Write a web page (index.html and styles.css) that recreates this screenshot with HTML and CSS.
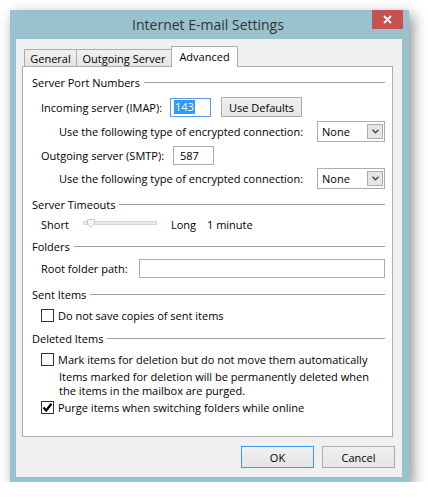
FILE: index.html
```html
<!DOCTYPE html>
<html lang="en">
<head>
    <meta charset="UTF-8">
    <meta name="viewport" content="width=device-width, initial-scale=1.0">
    <title>Internet E-mail Settings</title>
    <link rel="stylesheet" href="styles.css">
</head>
<body>
    <div class="window">
        <div class="titlebar">
            <span class="title">Internet E-mail Settings</span>
            <div class="close-btn">
                <svg width="9" height="9" viewBox="0 0 9 9"><path d="M1 1 L8 8 M8 1 L1 8" stroke="#fff" stroke-width="1.8"/></svg>
            </div>
        </div>

        <div class="client">
            <div class="tabs">
                <div class="tab">General</div>
                <div class="tab">Outgoing Server</div>
                <div class="tab active">Advanced</div>
            </div>

            <div class="panel">
                <div class="group-title"><span>Server Port Numbers</span></div>

                <div class="row row-imap">
                    <span class="label lbl-imap">Incoming server (IMAP):</span>
                    <div class="textbox port focused"><span class="selected-text">143</span></div>
                    <button class="btn btn-defaults">Use Defaults</button>
                </div>
                <div class="row row-enc">
                    <span class="label lbl-enc">Use the following type of encrypted connection:</span>
                    <div class="combo">
                        <span>None</span>
                        <div class="combo-arrow">
                            <svg width="7" height="5" viewBox="0 0 7 5"><path d="M0.5 0.8 L3.5 3.8 L6.5 0.8" fill="none" stroke="#444" stroke-width="1.4"/></svg>
                        </div>
                    </div>
                </div>
                <div class="row row-smtp">
                    <span class="label lbl-smtp">Outgoing server (SMTP):</span>
                    <div class="textbox port">587</div>
                </div>
                <div class="row row-enc row-enc2">
                    <span class="label lbl-enc">Use the following type of encrypted connection:</span>
                    <div class="combo">
                        <span>None</span>
                        <div class="combo-arrow">
                            <svg width="7" height="5" viewBox="0 0 7 5"><path d="M0.5 0.8 L3.5 3.8 L6.5 0.8" fill="none" stroke="#444" stroke-width="1.4"/></svg>
                        </div>
                    </div>
                </div>

                <div class="group-title gt-timeouts"><span>Server Timeouts</span></div>
                <div class="row row-timeout">
                    <span class="lbl-short">Short</span>
                    <div class="slider">
                        <svg class="slider-thumb" width="8" height="9" viewBox="0 0 8 9"><path d="M0.5 0.5 H7.5 V5 L4 8.5 L0.5 5 Z" fill="#f3f3f3" stroke="#c8c8c8"/></svg>
                    </div>
                    <span class="lbl-long">Long</span>
                    <span>1 minute</span>
                </div>

                <div class="group-title gt-folders"><span>Folders</span></div>
                <div class="row row-root">
                    <span class="label lbl-root">Root folder path:</span>
                    <div class="textbox root-path"></div>
                </div>

                <div class="group-title gt-sent"><span>Sent Items</span></div>
                <label class="row check-row row-sent">
                    <span class="checkbox"></span>
                    Do not save copies of sent items
                </label>

                <div class="group-title gt-deleted"><span>Deleted Items</span></div>
                <label class="row check-row row-mark">
                    <span class="checkbox"></span>
                    Mark items for deletion but do not move them automatically
                </label>
                <div class="note">Items marked for deletion will be permanently deleted when<br>the items in the mailbox are purged.</div>
                <label class="row check-row row-purge">
                    <span class="checkbox">
                        <svg width="11" height="11" viewBox="0 0 11 11"><path d="M1.5 5.5 L4.2 8.5 L9.5 1.8" fill="none" stroke="#000" stroke-width="2.2"/></svg>
                    </span>
                    Purge items when switching folders while online
                </label>
            </div>

            <div class="buttons">
                <button class="btn btn-dialog default">OK</button>
                <button class="btn btn-dialog">Cancel</button>
            </div>
        </div>
    </div>
</body>
</html>
```

FILE: styles.css
```css
body {
    margin: 0;
    background: #fff;
    font-family: 'Open Sans', 'Noto Sans', sans-serif;
    font-size: 11px;
    color: #000;
}

.window {
    position: relative;
    margin: 10px 0 0 10px;
    width: 399px;
    height: 472px;
    box-sizing: border-box;
    padding: 0 7px 5px 6px;
    background: #98c2cd;
    box-shadow: 4px 5px 13px rgba(0, 0, 0, 0.45);
}

.titlebar {
    height: 29px;
    display: flex;
    align-items: center;
    justify-content: center;
}

.title {
    font-size: 14px;
    color: #333;
    margin-left: -2px;
}

.close-btn {
    position: absolute;
    top: 0;
    right: 6px;
    width: 31px;
    height: 19px;
    background: #c75050;
    display: flex;
    align-items: center;
    justify-content: center;
}

.client {
    height: 438px;
    box-sizing: border-box;
    background: #f0f0f0;
    padding: 7px 0 0 6px;
}

.tabs {
    display: flex;
    align-items: flex-end;
    margin-left: 2px;
    height: 20px;
}

.tab {
    height: 17px;
    box-sizing: border-box;
    border: 1px solid #acacac;
    border-bottom: none;
    background: linear-gradient(#f0f0f0, #e5e5e5);
    display: flex;
    align-items: center;
    justify-content: center;
    margin-left: -1px;
}

.tab:first-child {
    margin-left: 0;
    width: 53px;
}

.tab:nth-child(2) {
    width: 96px;
}

.tab.active {
    position: relative;
    z-index: 1;
    width: 67px;
    height: 21px;
    margin-bottom: -1px;
    background: #fff;
    padding-bottom: 1px;
}

.panel {
    width: 371px;
    height: 371px;
    box-sizing: border-box;
    border: 1px solid #acacac;
    background: #fff;
    padding: 7px 7px 0 9px;
}

.group-title {
    height: 16px;
    display: flex;
    align-items: center;
}

.group-title::after {
    content: "";
    flex: 1;
    height: 1px;
    background: #a0a0a0;
    margin-left: 4px;
}

.row {
    display: flex;
    align-items: center;
    padding-left: 9px;
}

.label {
    flex-shrink: 0;
}

.row-imap {
    height: 20px;
    margin-top: 7px;
}

.lbl-imap {
    width: 129px;
}

.textbox {
    height: 19px;
    box-sizing: border-box;
    border: 1px solid #acacac;
    background: #fff;
    display: flex;
    align-items: center;
}

.port {
    width: 41px;
    padding-left: 6px;
}

.focused {
    border-color: #569de5;
    padding-left: 3px;
}

.selected-text {
    background: #3399ff;
    color: #fff;
    padding: 0 1px;
    line-height: 14px;
}

.btn {
    font-family: inherit;
    font-size: 11px;
    color: #000;
    border: 1px solid #acacac;
    background: linear-gradient(#f0f0f0, #e5e5e5);
    padding: 0;
    box-sizing: border-box;
}

.btn-defaults {
    margin-left: 10px;
    width: 81px;
    height: 20px;
}

.row-enc {
    height: 21px;
    margin-top: 4px;
    padding-left: 27px;
}

.lbl-enc {
    width: 258px;
}

.combo {
    width: 69px;
    height: 21px;
    box-sizing: border-box;
    border: 1px solid #acacac;
    background: #fff;
    display: flex;
    align-items: center;
    padding-left: 4px;
}

.combo-arrow {
    margin-left: auto;
    margin-right: 1px;
    width: 16px;
    height: 15px;
    box-sizing: border-box;
    border: 1px solid #acacac;
    background: #e6e6e6;
    display: flex;
    align-items: center;
    justify-content: center;
}

.row-smtp {
    height: 19px;
    margin-top: 4px;
}

.lbl-smtp {
    width: 132px;
}

.row-enc2 {
    margin-top: 3px;
}

.gt-timeouts {
    margin-top: 7px;
}

.row-timeout {
    height: 16px;
    margin-top: 4px;
}

.lbl-short {
    width: 42px;
}

.slider {
    position: relative;
    width: 74px;
    height: 4px;
    box-sizing: border-box;
    background: #e7eaea;
    border: 1px solid #d6d6d6;
    margin-top: -2px;
}

.slider-thumb {
    position: absolute;
    left: 3px;
    top: -3px;
}

.lbl-long {
    margin-left: 14px;
    width: 36px;
}

.gt-folders {
    margin-top: 6px;
}

.row-root {
    height: 19px;
    margin-top: 5px;
}

.lbl-root {
    width: 98px;
}

.root-path {
    width: 247px;
}

.gt-sent {
    margin-top: 8px;
}

.check-row {
    height: 16px;
}

.checkbox {
    width: 13px;
    height: 13px;
    box-sizing: border-box;
    border: 1px solid #333;
    background: #fff;
    margin-right: 4px;
    flex-shrink: 0;
    display: flex;
    align-items: center;
    justify-content: center;
}

.row-sent {
    margin-top: 5px;
}

.gt-deleted {
    margin-top: 7px;
}

.row-mark {
    margin-top: 5px;
}

.note {
    margin-top: 3px;
    padding-left: 27px;
    line-height: 14px;
}

.row-purge {
    margin-top: 1px;
}

.buttons {
    display: flex;
    justify-content: flex-end;
    gap: 8px;
    margin-top: 9px;
    padding-right: 7px;
}

.btn-dialog {
    width: 73px;
    height: 22px;
}

.btn-dialog.default {
    border-color: #3399ff;
}
```
